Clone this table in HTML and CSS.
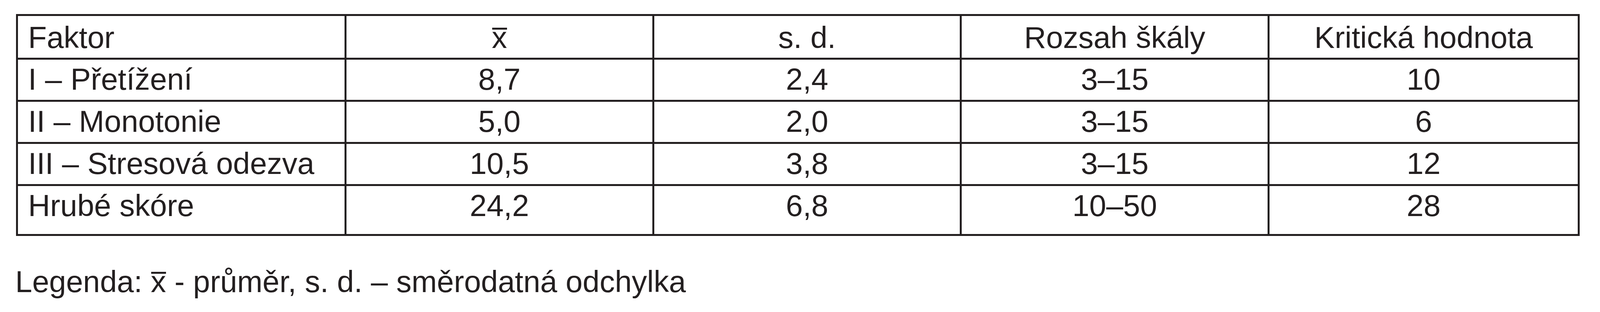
FILE: index.html
```html
<!DOCTYPE html>
<html lang="cs">
<head>
<meta charset="utf-8">
<title>Faktory</title>
<link rel="stylesheet" href="styles.css">
</head>
<body>
<main class="page">
<table class="tab">
  <colgroup>
    <col class="c1">
    <col class="cn">
    <col class="cn">
    <col class="cn">
    <col class="c5">
  </colgroup>
  <tr class="head">
    <td class="lab">Faktor</td>
    <td><span class="xbar">x</span></td>
    <td>s. d.</td>
    <td>Rozsah škály</td>
    <td>Kritická hodnota</td>
  </tr>
  <tr>
    <td class="lab">I – Přetížení</td>
    <td>8,7</td>
    <td>2,4</td>
    <td>3–15</td>
    <td>10</td>
  </tr>
  <tr>
    <td class="lab">II – Monotonie</td>
    <td>5,0</td>
    <td>2,0</td>
    <td>3–15</td>
    <td>6</td>
  </tr>
  <tr>
    <td class="lab">III – Stresová odezva</td>
    <td>10,5</td>
    <td>3,8</td>
    <td>3–15</td>
    <td>12</td>
  </tr>
  <tr class="last">
    <td class="lab">Hrubé skóre</td>
    <td>24,2</td>
    <td>6,8</td>
    <td>10–50</td>
    <td>28</td>
  </tr>
</table>
<p class="legend">Legenda: <span class="xbar">x</span> - průměr, s. d. – směrodatná odchylka</p>
</main>
</body>
</html>
```

FILE: styles.css
```css
html, body {
  margin: 0;
  padding: 0;
  background: #ffffff;
}
.page {
  display: block;
  padding: 36px 52px 0 41px;
  font-family: "Liberation Sans", Arial, sans-serif;
  font-size: 78px;
  color: #231f20;
}
.tab {
  border-collapse: collapse;
  width: 100%;
  table-layout: fixed;
  border: 5px solid #231f20;
}
.c1 { width: 21.04%; }
.cn { width: 19.7%; }
.c5 { width: 19.86%; }
.tab td {
  border: 5px solid #231f20;
  padding: 0 0 3px 0;
  line-height: 100px;
  height: 100px;
  text-align: center;
  vertical-align: top;
  white-space: nowrap;
  overflow: hidden;
}
.tab td.lab {
  text-align: left;
  padding-left: 26px;
}
.tab .head td {
  padding-top: 5px;
  padding-bottom: 2px;
}
.tab .last td {
  padding-bottom: 23px;
}
.xbar {
  position: relative;
  display: inline-block;
  line-height: 100px;
}
.xbar::before {
  content: "";
  position: absolute;
  left: 1px;
  right: 0;
  top: 25px;
  height: 5px;
  background: #231f20;
}
.legend {
  margin: 67px 0 0 -2px;
  line-height: 100px;
  white-space: nowrap;
}
```
